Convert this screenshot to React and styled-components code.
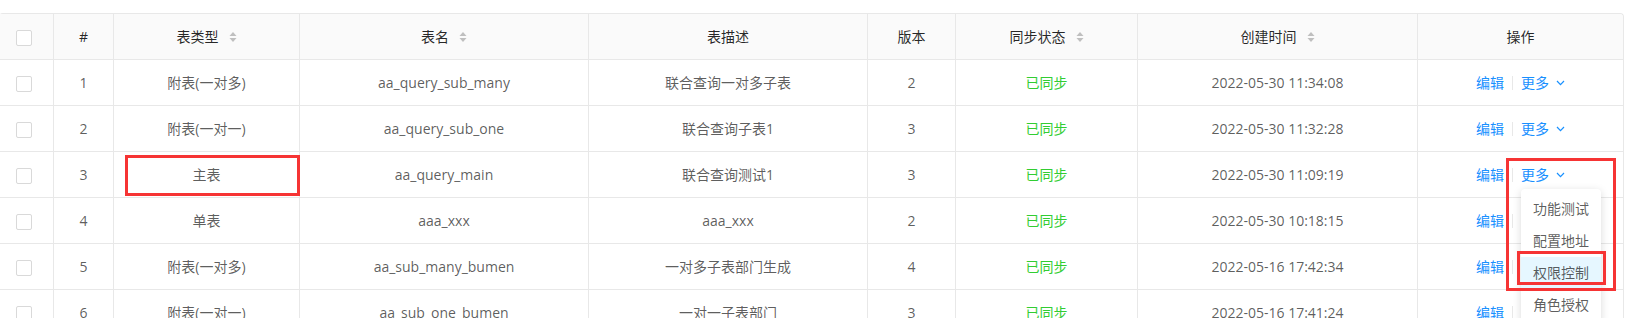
import React from "react";
import styled, { createGlobalStyle } from "styled-components";

const COLORS = {
  border: "#e8e8e8",
  headBg: "#fafafa",
  head: "rgba(0, 0, 0, 0.85)",
  text: "rgba(0, 0, 0, 0.65)",
  link: "#1890ff",
  synced: "limegreen",
  sorter: "#bfbfbf",
  mark: "#f63434",
};

const COLUMNS = [
  { key: "check", width: 54 },
  { key: "index", title: "#", width: 60 },
  { key: "type", title: "表类型", width: 186, sortable: true },
  { key: "name", title: "表名", width: 289, sortable: true },
  { key: "desc", title: "表描述", width: 279 },
  { key: "version", title: "版本", width: 88 },
  { key: "sync", title: "同步状态", width: 182, sortable: true },
  { key: "created", title: "创建时间", width: 280, sortable: true },
  { key: "action", title: "操作", width: 205 },
];

const ROWS = [
  { id: 1, type: "附表(一对多)", name: "aa_query_sub_many", desc: "联合查询一对多子表", version: 2, created: "2022-05-30 11:34:08" },
  { id: 2, type: "附表(一对一)", name: "aa_query_sub_one", desc: "联合查询子表1", version: 3, created: "2022-05-30 11:32:28" },
  { id: 3, type: "主表", name: "aa_query_main", desc: "联合查询测试1", version: 3, created: "2022-05-30 11:09:19", open: true },
  { id: 4, type: "单表", name: "aaa_xxx", desc: "aaa_xxx", version: 2, created: "2022-05-30 10:18:15" },
  { id: 5, type: "附表(一对多)", name: "aa_sub_many_bumen", desc: "一对多子表部门生成", version: 4, created: "2022-05-16 17:42:34" },
  { id: 6, type: "附表(一对一)", name: "aa_sub_one_bumen", desc: "一对一子表部门", version: 3, created: "2022-05-16 17:41:24" },
];

const MENU_ITEMS = ["功能测试", "配置地址", "权限控制", "角色授权"];

const GlobalStyle = createGlobalStyle`
  html, body {
    margin: 0;
    padding: 0;
    background: #fff;
    overflow: hidden;
  }
  body {
    font-family: "Open Sans", "Noto Sans CJK SC", sans-serif;
    font-size: 14px;
    color: ${COLORS.text};
  }
`;

function Sorter() {
  return (
    <SorterIcon width="8" height="12" viewBox="0 0 8 12">
      <path d="M0.5 5 L4 1 L7.5 5 Z" />
      <path d="M0.5 7 L4 11 L7.5 7 Z" />
    </SorterIcon>
  );
}

function Chevron() {
  return (
    <ChevronIcon width="9" height="6" viewBox="0 0 9 6">
      <polyline points="1,1 4.5,4.6 8,1" />
    </ChevronIcon>
  );
}

function App() {
  return (
    <Page>
      <GlobalStyle />
      <TableFrame>
        <Table>
          <colgroup>
            {COLUMNS.map((c) => (
              <Col key={c.key} $width={c.width} />
            ))}
          </colgroup>
          <thead>
            <tr>
              {COLUMNS.map((c, i) => (
                <Th key={c.key} $last={i === COLUMNS.length - 1}>
                  {c.key === "check" ? (
                    <Checkbox />
                  ) : (
                    <HeadInner>
                      {c.title}
                      {c.sortable && <Sorter />}
                    </HeadInner>
                  )}
                </Th>
              ))}
            </tr>
          </thead>
          <tbody>
            {ROWS.map((r) => (
              <tr key={r.id}>
                <Td>
                  <Checkbox />
                </Td>
                <Td>{r.id}</Td>
                <Td>{r.type}</Td>
                <Td>{r.name}</Td>
                <Td>{r.desc}</Td>
                <Td>{r.version}</Td>
                <Td>
                  <Synced>已同步</Synced>
                </Td>
                <Td>{r.created}</Td>
                <Td $last>
                  <Actions>
                    <Link>编辑</Link>
                    <Divider />
                    <MoreTrigger>
                      <Link>更多</Link>
                      <Chevron />
                      {r.open && (
                        <Menu>
                          {MENU_ITEMS.map((m, i) => (
                            <MenuItem key={m} $active={i === 2}>
                              {m}
                            </MenuItem>
                          ))}
                        </Menu>
                      )}
                    </MoreTrigger>
                  </Actions>
                </Td>
              </tr>
            ))}
          </tbody>
        </Table>
      </TableFrame>

      <Mark $left={125} $top={155} $width={175} $height={41} />
      <Mark $left={1506} $top={158} $width={110} $height={133} />
      <Mark $left={1517} $top={251} $width={89} $height={34} />
    </Page>
  );
}

const Page = styled.div`
  position: relative;
  padding-top: 13px;
  height: 318px;
  box-sizing: border-box;
`;

const TableFrame = styled.div`
  width: 1625px;
  margin-left: -1px;
  border: 1px solid ${COLORS.border};
  border-bottom: none;
  border-radius: 4px 4px 0 0;
  box-sizing: border-box;
`;

const Table = styled.table`
  width: 1623px;
  table-layout: fixed;
  border-collapse: separate;
  border-spacing: 0;
`;

const Col = styled.col`
  width: ${(p) => p.$width}px;
`;

const cell = `
  box-sizing: border-box;
  height: 46px;
  padding: 0 8px;
  text-align: center;
  vertical-align: middle;
  white-space: nowrap;
  border-bottom: 1px solid ${COLORS.border};
  line-height: 22px;
`;

const Th = styled.th`
  ${cell}
  background: ${COLORS.headBg};
  color: ${COLORS.head};
  font-weight: 400;
  border-right: ${(p) => (p.$last ? "none" : `1px solid ${COLORS.border}`)};
  &:last-child {
    border-top-right-radius: 4px;
  }
`;

const Td = styled.td`
  ${cell}
  color: ${COLORS.text};
  border-right: ${(p) => (p.$last ? "none" : `1px solid ${COLORS.border}`)};
`;

const HeadInner = styled.span`
  display: inline-flex;
  align-items: center;
  gap: 10px;
`;

const SorterIcon = styled.svg`
  display: block;
  fill: ${COLORS.sorter};
`;

const Checkbox = styled.span`
  display: inline-block;
  width: 16px;
  height: 16px;
  box-sizing: border-box;
  border: 1px solid #d9d9d9;
  border-radius: 2px;
  background: #fff;
  vertical-align: middle;
  margin-left: -5px;
`;

const Synced = styled.span`
  color: ${COLORS.synced};
`;

const Actions = styled.div`
  display: inline-flex;
  align-items: center;
`;

const Link = styled.a`
  color: ${COLORS.link};
  cursor: pointer;
`;

const Divider = styled.span`
  display: inline-block;
  width: 1px;
  height: 14px;
  margin: 0 8px;
  background: ${COLORS.border};
`;

const MoreTrigger = styled.span`
  position: relative;
  display: inline-flex;
  align-items: center;
  gap: 7px;
`;

const ChevronIcon = styled.svg`
  display: block;
  fill: none;
  stroke: ${COLORS.link};
  stroke-width: 1.2;
`;

const Menu = styled.ul`
  position: absolute;
  top: calc(100% + 3px);
  left: 0;
  z-index: 2;
  margin: 0;
  padding: 4px 0;
  width: 80px;
  list-style: none;
  background: #fff;
  border-radius: 4px;
  box-shadow: 0 2px 8px rgba(0, 0, 0, 0.15);
  text-align: left;
`;

const MenuItem = styled.li`
  padding: 5px 12px;
  line-height: 22px;
  color: ${COLORS.text};
  background: ${(p) => (p.$active ? "#e6f7ff" : "transparent")};
`;

const Mark = styled.div`
  position: absolute;
  left: ${(p) => p.$left}px;
  top: ${(p) => p.$top}px;
  width: ${(p) => p.$width}px;
  height: ${(p) => p.$height}px;
  box-sizing: border-box;
  border: 3px solid ${COLORS.mark};
  pointer-events: none;
  z-index: 5;
`;

export default App;
